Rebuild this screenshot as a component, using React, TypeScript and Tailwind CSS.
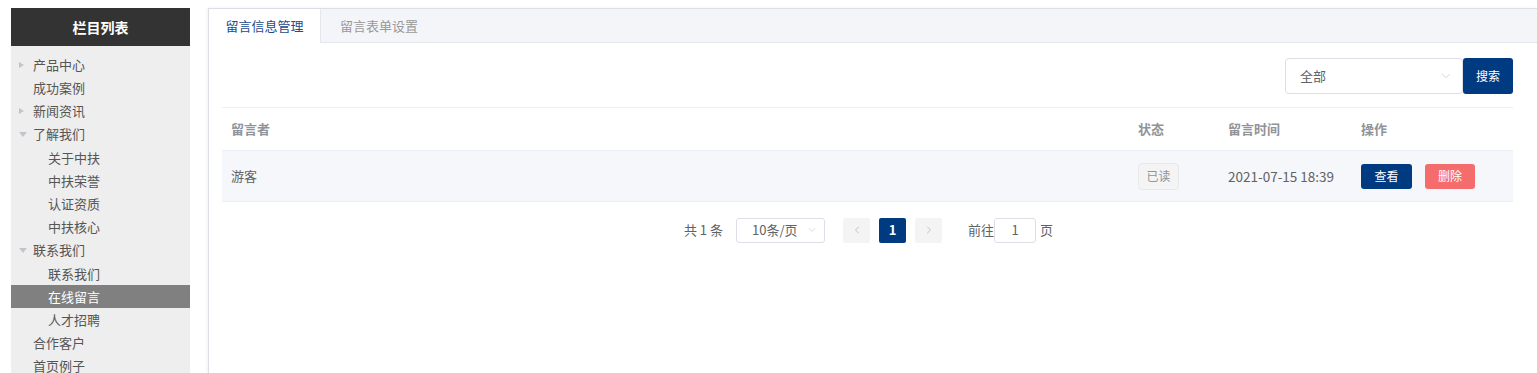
import { ChevronDown, ChevronLeft, ChevronRight } from "lucide-react";

const font = { fontFamily: '"Noto Sans CJK SC", "Noto Sans", sans-serif' };

type Item = { label: string; level: 0 | 1; arrow?: "right" | "down"; active?: boolean };

const items: Item[] = [
  { label: "产品中心", level: 0, arrow: "right" },
  { label: "成功案例", level: 0 },
  { label: "新闻资讯", level: 0, arrow: "right" },
  { label: "了解我们", level: 0, arrow: "down" },
  { label: "关于中扶", level: 1 },
  { label: "中扶荣誉", level: 1 },
  { label: "认证资质", level: 1 },
  { label: "中扶核心", level: 1 },
  { label: "联系我们", level: 0, arrow: "down" },
  { label: "联系我们", level: 1 },
  { label: "在线留言", level: 1, active: true },
  { label: "人才招聘", level: 1 },
  { label: "合作客户", level: 0 },
  { label: "首页例子", level: 0 },
];

function Sidebar() {
  return (
    <aside className="ml-[11px] mt-2 w-[179px] shrink-0 bg-[#eeeeee] h-[365px] overflow-hidden">
      <div className="h-[38px] bg-[#333333] flex items-center justify-center text-white text-[14px] font-bold">
        栏目列表
      </div>
      <ul className="pt-[7px]">
        {items.map((it, i) => (
          <li
            key={i}
            className={`h-[23.2px] flex items-center text-[13px] ${
              it.active ? "bg-[#808080] text-white" : "text-[#555555]"
            } ${it.level === 0 ? "pl-[21px]" : "pl-[37px]"}`}
          >
            {it.level === 0 && (
              <span className="w-[11px] -ml-[13px] mr-[3px] flex items-center">
                {it.arrow === "right" && (
                  <span className="block w-0 h-0 border-y-[3.5px] border-y-transparent border-l-[5px] border-l-[#c0c4cc]" />
                )}
                {it.arrow === "down" && (
                  <span className="block w-0 h-0 border-x-[4px] border-x-transparent border-t-[5px] border-t-[#c0c4cc]" />
                )}
              </span>
            )}
            {it.label}
          </li>
        ))}
      </ul>
    </aside>
  );
}

function Toolbar() {
  return (
    <div className="flex justify-end pt-[15px] pb-[13px] border-b border-[#ebeef5]">
      <div className="w-[178px] h-[36px] border border-[#dcdfe6] rounded-[4px] bg-white flex items-center justify-between pl-[14px] pr-[9px] text-[13px] text-[#606266]">
        全部
        <ChevronDown size={14} strokeWidth={1.2} className="text-[#c0c4cc]" />
      </div>
      <button className="w-[50px] h-[36px] rounded-[3px] bg-[#003a80] text-white text-[12px]">
        搜索
      </button>
    </div>
  );
}

function MessageTable() {
  const cols = "grid grid-cols-[906px_90px_133px_1fr]";
  return (
    <div className="text-[13px]">
      <div className={`${cols} h-[43px] items-center border-b border-[#ebeef5] text-[#909399] font-bold`}>
        <div className="pl-[9px]">留言者</div>
        <div className="pl-[10px]">状态</div>
        <div className="pl-[10px]">留言时间</div>
        <div className="pl-[10px]">操作</div>
      </div>
      <div className={`${cols} h-[51px] items-center border-b border-[#ebeef5] bg-[#f5f7fa] text-[#606266]`}>
        <div className="pl-[9px]">游客</div>
        <div className="pl-[10px]">
          <span className="inline-flex items-center justify-center w-[41px] h-[27px] border border-[#e9e9eb] bg-[#f4f4f5] rounded-[4px] text-[#909399] text-[12px]">
            已读
          </span>
        </div>
        <div className="pl-[10px] text-[13.5px]">2021-07-15 18:39</div>
        <div className="pl-[10px] flex gap-[13px]">
          <button className="w-[51px] h-[25px] rounded-[3px] bg-[#003a80] text-white text-[12px]">查看</button>
          <button className="w-[50px] h-[25px] rounded-[3px] bg-[#f56c6c] text-white text-[12px]">删除</button>
        </div>
      </div>
    </div>
  );
}

function Pagination() {
  return (
    <div className="flex justify-center items-center mt-[15px] h-[26px] text-[13px] text-[#606266] pl-[2px]">
      <span className="mr-[13px]">共 1 条</span>
      <div className="w-[89px] h-[25px] border border-[#dcdfe6] rounded-[3px] flex items-center justify-between pl-[15px] pr-[6px] text-[13px]">
        10条/页
        <ChevronDown size={12} strokeWidth={1.2} className="text-[#c0c4cc]" />
      </div>
      <div className="ml-[18px] w-[27px] h-[25px] bg-[#f4f4f5] rounded-[2px] flex items-center justify-center text-[#c0c4cc]">
        <ChevronLeft size={12} strokeWidth={2} />
      </div>
      <div className="ml-[9px] w-[27px] h-[25px] bg-[#003a80] rounded-[2px] flex items-center justify-center text-white font-bold text-[13px]">
        1
      </div>
      <div className="ml-[9px] w-[27px] h-[25px] bg-[#f4f4f5] rounded-[2px] flex items-center justify-center text-[#c0c4cc]">
        <ChevronRight size={12} strokeWidth={2} />
      </div>
      <span className="ml-[26px]">前往</span>
      <div className="w-[42px] h-[25px] border border-[#dcdfe6] rounded-[3px] flex items-center justify-center">1</div>
      <span className="ml-[4px]">页</span>
    </div>
  );
}

export default function App() {
  return (
    <div className="flex w-[1537px] h-[373px] bg-white overflow-hidden" style={font}>
      <Sidebar />
      <main className="ml-[18px] mt-2 flex-1 border-l border-t border-[#dcdfe6] shadow-[-1px_0_3px_rgba(0,0,0,0.06)]">
        <div className="flex h-[34px] bg-[#f4f5f9] border-b border-[#e4e7ed]">
          <div className="w-[112px] -mb-px bg-white border-r border-[#e4e7ed] flex items-center justify-center text-[13px] text-[#1c4b8f]">
            留言信息管理
          </div>
          <div className="pl-[19px] flex items-center text-[13px] text-[#999999]">留言表单设置</div>
        </div>
        <div className="pl-[13px] pr-[24px]">
          <Toolbar />
          <MessageTable />
          <Pagination />
        </div>
      </main>
    </div>
  );
}
